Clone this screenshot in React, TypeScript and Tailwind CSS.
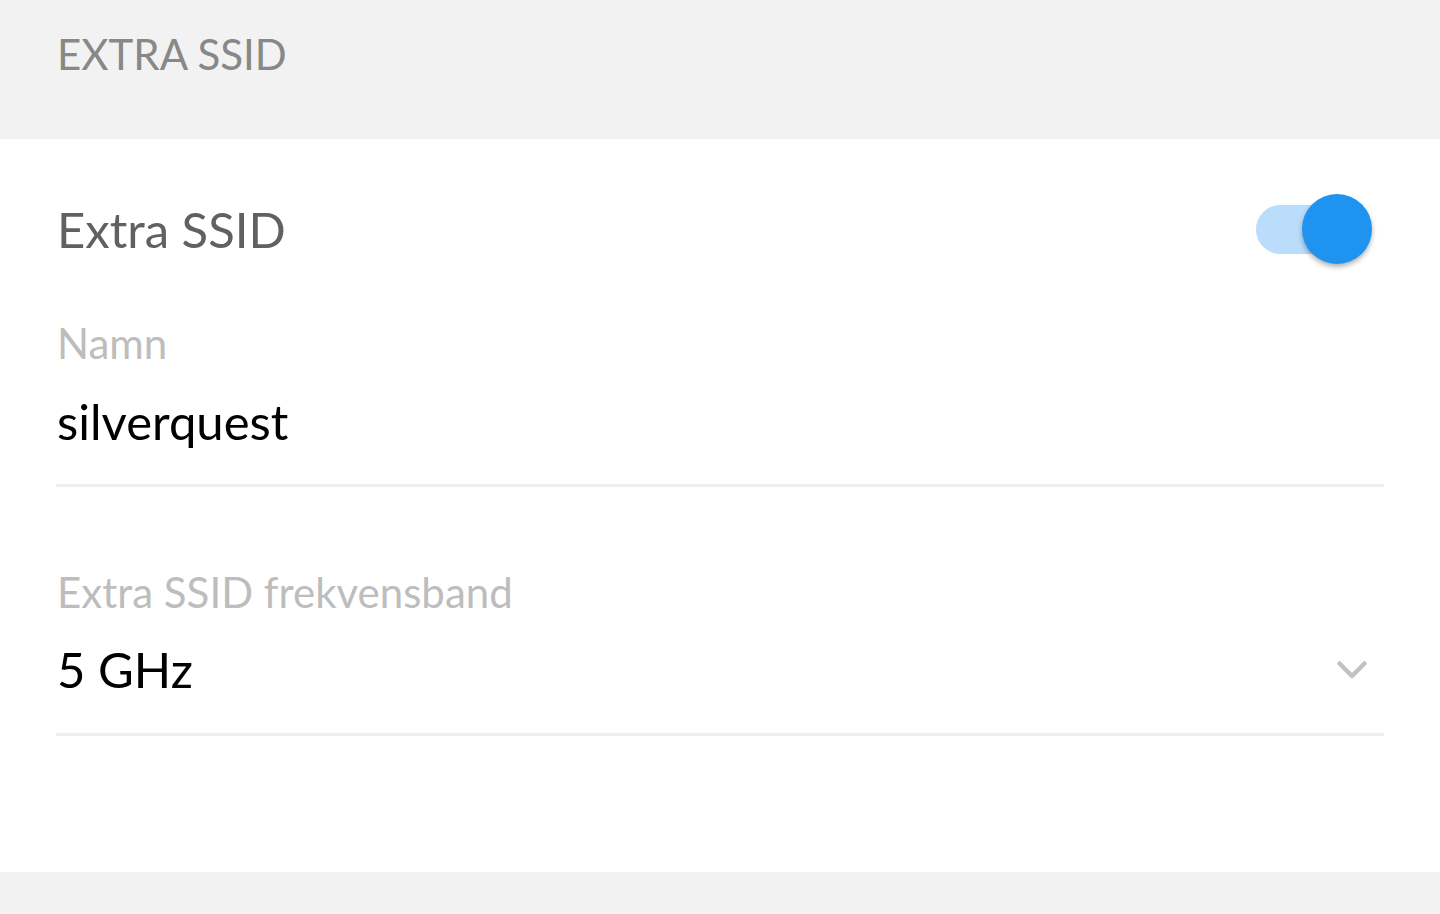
const font = { fontFamily: "Lato, 'Noto Sans', sans-serif" };

const Toggle = ({ on }: { on: boolean }) => (
	<div className="relative w-[116px] h-[70px] flex items-center">
		<div className="w-[102px] h-[49px] rounded-full bg-[#b9ddfb]" />
		<div
			className={`absolute top-0 w-[70px] h-[70px] rounded-full bg-[#1e93f0] shadow-[0_3px_5px_rgba(0,0,0,0.3)] ${on ? "left-[46px]" : "left-0"}`}
		/>
	</div>
);

const Chevron = () => (
	<svg width="32" height="20" viewBox="0 0 32 20" fill="none">
		<polyline
			points="3.5,3.5 16,16 28.5,3.5"
			stroke="#c2c2c2"
			strokeWidth="4.5"
			strokeLinecap="round"
			strokeLinejoin="round"
		/>
	</svg>
);

export default function App() {
	return (
		<div className="w-[1440px] h-[914px] bg-[#f2f2f2] flex flex-col" style={font}>
			<div className="h-[139px] pt-[33px] px-[57px]">
				<div className="text-[42px] leading-none text-[#888888]">EXTRA SSID</div>
			</div>
			<div className="bg-white h-[733px] px-[56px]">
				<div className="mt-[55px] flex items-center justify-between pr-[12px] pl-px">
					<div className="text-[49px] leading-none text-[#616161]">Extra SSID</div>
					<Toggle on />
				</div>
				<div className="mt-[58px] pl-px text-[42px] leading-none text-[#bdbdbd]">Namn</div>
				<div className="mt-[33px] pl-px text-[49px] leading-none text-black">silverquest</div>
				<div className="mt-[38px] h-[3px] bg-[#eeeeee]" />
				<div className="mt-[84px] pl-px text-[42px] leading-none text-[#bdbdbd]">
					Extra SSID frekvensband
				</div>
				<div className="mt-[32px] pl-px flex items-center justify-between pr-[16px]">
					<div className="text-[49px] leading-none text-black">5 GHz</div>
					<Chevron />
				</div>
				<div className="mt-[39px] h-[3px] bg-[#eeeeee]" />
			</div>
		</div>
	);
}
